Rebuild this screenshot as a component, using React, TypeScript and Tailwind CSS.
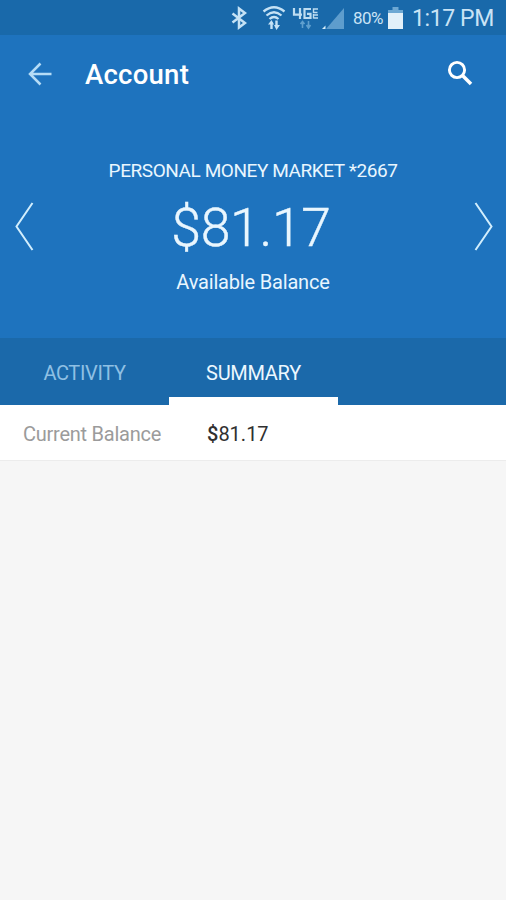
function StatusIcons() {
  return (
    <div className="flex h-[34px] items-center">
      {/* Bluetooth */}
      <svg className="mr-[15px] h-[24px] w-[16px]" viewBox="0 0 16 24" fill="none" stroke="#c5e2f5" strokeWidth="2.5">
        <path d="M1.5 7.5 L14 17 L8 21.5 V2.5 L14 7 L1.5 16.5" />
      </svg>
      {/* Wi-Fi with transfer arrows */}
      <svg className="mr-[6px] h-[26px] w-[24px]" viewBox="0 0 24 26" fill="none" stroke="#c5e2f5" strokeWidth="2.3">
        <path d="M1.5 6.5 Q12 -2 22.5 6.5" />
        <path d="M4.5 10.5 Q12 4 19.5 10.5" />
        <path d="M7.5 14 Q12 10 16.5 14" />
        <path d="M9.5 24 V17 M14.5 15.5 V22" strokeWidth="2.4" />
        <path d="M6 19.5 L9.5 15 L12 19.5Z M12 20 H18 L14.5 25Z" fill="#c5e2f5" stroke="none" />
      </svg>
      {/* 4G LTE */}
      <svg className="h-[24px] w-[27px]" viewBox="0 0 27 24" fill="none" stroke="#bddcf1">
        <path d="M2 2 V8.7 H10 M8 2 V13" strokeWidth="2.2" />
        <path d="M19 3 H12.5 V12 H18.5 V7.8 H15" strokeWidth="2.2" />
        <path d="M26 3 H21.5 V6.5 H25.5 M21.5 9 H26 M21.5 12 H26 M21.5 8 V12.5" strokeWidth="1.4" />
        <path d="M10.5 22 V16 M8.5 18 L10.5 15.5 L12.5 18 M16.5 15 V21 M14.5 19 L16.5 22 L18.5 19" stroke="#5f9fce" strokeWidth="1.6" />
      </svg>
      {/* Signal strength */}
      <svg className="ml-[2px] mr-[8px] h-[24px] w-[24px]" viewBox="0 0 24 24">
        <path d="M5 23 L23 2 V23Z" fill="#5e9dcd" />
        <path d="M1 23 L4.5 19.5 V23Z" fill="#d6edfa" />
      </svg>
    </div>
  );
}

export default function App() {
  return (
    <div className="flex h-[900px] w-[506px] flex-col overflow-hidden bg-[#f6f6f6] font-['Roboto','Liberation_Sans',sans-serif]">
      <div className="flex h-[35px] items-center justify-end bg-[#1969aa] pr-[12px] text-[#c9e3f5]">
        <StatusIcons />
        <span className="w-[32px] whitespace-nowrap text-[17px] leading-[36px] tracking-[-0.6px]">80%</span>
        <svg className="ml-[3px] mr-[9px] h-[22px] w-[15px]" viewBox="0 0 15 22">
          <path d="M4.5 0 H10.5 V3 H15 V7 H0 V3 H4.5Z" fill="#6da8d3" />
          <path d="M0 6 H15 V22 H0Z" fill="#e2f0f9" />
        </svg>
        <span className="w-[82px] whitespace-nowrap pt-[2px] text-[23px] leading-[37px] tracking-[-0.4px]">1:17 PM</span>
      </div>

      <header className="flex h-[78px] items-center bg-[#1e73be]">
        <svg className="ml-[28px] h-[24px] w-[24px]" viewBox="0 0 24 24" fill="none" stroke="#b5dcf6" strokeWidth="2.5">
          <path d="M23.5 12 H2 M12.5 1.5 L2 12 L12.5 22.5" />
        </svg>
        <h1 className="ml-[33px] flex-1 pt-[2px] text-[27.5px] font-medium tracking-[0.25px] text-white">Account</h1>
        <svg className="mr-[33px] mt-[-3px] h-[26px] w-[26px]" viewBox="0 0 26 26" fill="none" stroke="#fff" strokeWidth="2.9">
          <circle cx="10" cy="10" r="7.6" />
          <path d="M15.5 15.5 L24 24" strokeWidth="3.5" />
        </svg>
      </header>

      <section className="flex h-[225px] justify-between bg-[#1e73be] text-[#e9f6fe]">
        <svg className="ml-[15px] mt-[89px] h-[49px] w-[19px]" viewBox="0 0 19 49" fill="none" stroke="#d2eefd" strokeWidth="2">
          <path d="M17.5 1 L1.5 24.5 L17.5 48" />
        </svg>
        <div className="mr-[2px] flex flex-col items-center whitespace-nowrap pt-[44px]">
          <div className="text-[19px] leading-[28px] tracking-[-0.43px]">PERSONAL MONEY MARKET *2667</div>
          <div className="mr-[4px] mt-[13px] text-[53.5px] font-light leading-[60px] tracking-[-0.3px] [-webkit-text-stroke:0.4px_#e9f6fe]">$81.17</div>
          <div className="mt-[10px] text-[20px] leading-[28px] tracking-[-0.18px]">Available Balance</div>
        </div>
        <svg className="mr-[13px] mt-[89px] h-[49px] w-[19px]" viewBox="0 0 19 49" fill="none" stroke="#d2eefd" strokeWidth="2">
          <path d="M1.5 1 L17.5 24.5 L1.5 48" />
        </svg>
      </section>

      <nav className="flex h-[67px] bg-[#1b69aa] text-[20px] leading-[71px]">
        <div className="w-[169px] text-center tracking-[-0.35px] text-[#8fc0e4]">ACTIVITY</div>
        <div className="w-[169px] border-b-[8px] border-white text-center tracking-[-0.3px] text-[#ecf8ff]">SUMMARY</div>
      </nav>

      <div className="flex h-[56px] border-b border-[#ececec] bg-white text-[20px] leading-[59px]">
        <div className="w-[207px] pl-[23px] tracking-[-0.25px] text-[#9b9b9b]">Current Balance</div>
        <div className="text-[#303030]"><span className="font-medium">$</span>81.17</div>
      </div>
    </div>
  );
}
